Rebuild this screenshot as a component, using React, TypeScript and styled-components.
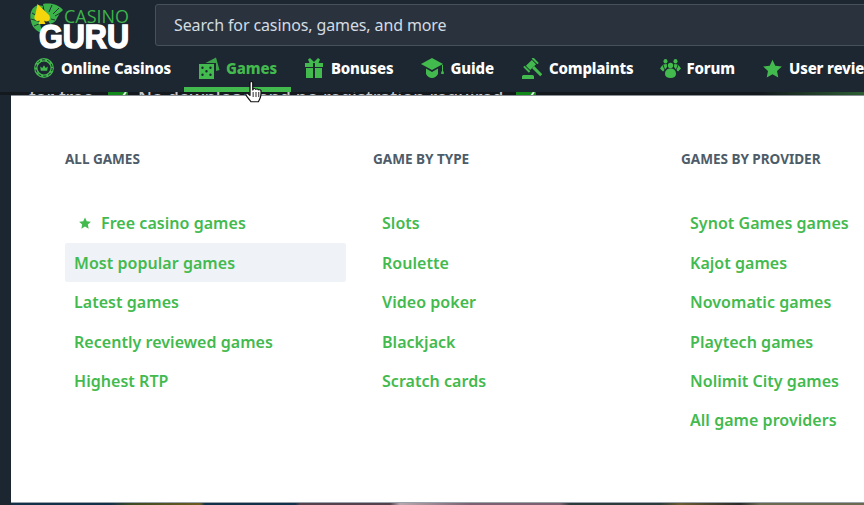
import React from "react";
import styled, { createGlobalStyle } from "styled-components";

const GREEN = "#43ba4e";

const Global = createGlobalStyle`
  html, body { margin: 0; padding: 0; background: #1c2630; }
  body { width: 864px; height: 505px; overflow: hidden; font-family: "Noto Sans", "Liberation Sans", sans-serif; }
  * { box-sizing: border-box; }
`;

const Page = styled.div`
  position: relative;
  width: 864px;
  height: 505px;
  overflow: hidden;
  display: flex;
  flex-direction: column;
  background: #1c2630;
`;

const Header = styled.header`
  height: 92px;
  flex: none;
  background: #1d2731;
`;

const TopRow = styled.div`
  height: 50px;
  display: flex;
  align-items: flex-start;
  padding: 4px 0 0 28px;
`;

const LogoBox = styled.a`
  width: 127px;
  height: 48px;
  flex: none;
  margin-top: -2px;
  display: block;
`;

const SearchBox = styled.div`
  width: 720px;
  height: 42px;
  flex: none;
  display: flex;
  align-items: center;
  padding-left: 18px;
  background: #2a333d;
  border: 1px solid #46525b;
  border-radius: 3px;
  color: #d3dbe3;
  font-size: 16px;
  letter-spacing: -0.12px;
`;

const Nav = styled.nav`
  height: 42px;
  display: flex;
  padding-left: 20px;
  white-space: nowrap;
`;

const NavItem = styled.a<{ $active?: boolean; $gap: number; $trim?: number }>`
  display: flex;
  align-items: center;
  flex: none;
  height: 42px;
  padding: 5px 14px 6px;
  gap: ${(p) => p.$gap}px;
  margin-right: ${(p) => -(p.$trim ?? 0)}px;
  font-family: "Noto Sans", sans-serif;
  font-weight: 800;
  font-size: 15px;
  letter-spacing: -0.15px;
  color: ${(p) => (p.$active ? GREEN : "#fff")};
  border-bottom: 5px solid ${(p) => (p.$active ? "#43ba4e" : "transparent")};
`;

const NavIcon = styled.svg`
  flex: none;
  fill: ${GREEN};
  display: block;
`;

const Teaser = styled.div`
  height: 3px;
  flex: none;
  overflow: hidden;
  background: linear-gradient(90deg, #14191e 0, #14191e 88%, #2c5e32 100%);
  color: #c4c8cc;
  font-size: 18px;
  font-weight: 500;
  letter-spacing: 0.07px;
  line-height: 11px;
  white-space: nowrap;
  padding-left: 29px;
  display: flex;
`;

const TeaserLead = styled.span`
  width: 67px;
  flex: none;
`;

const TeaserCheck = styled.span`
  width: 20px;
  height: 11px;
  margin: 0 10px 0 12px;
  background: #118a1a;
  flex: none;
  display: flex;
  justify-content: flex-end;
`;

const Tick = styled.svg`
  display: block;
  flex: none;
`;

const Menu = styled.section`
  flex: 1;
  margin-left: 11px;
  width: 1000px;
  background: #fff;
  border-top: 1px solid #8a9096;
  border-bottom: 1px solid #9aa3aa;
  padding: 52px 0 0 54px;
  display: grid;
  grid-template-columns: repeat(3, 281px);
  column-gap: 27px;
  align-content: start;
`;

const Column = styled.div`
  display: flex;
  flex-direction: column;
`;

const Heading = styled.h3`
  margin: 0 0 33.7px;
  height: 22px;
  line-height: 22px;
  font-size: 13.6px;
  font-weight: 700;
  color: #4d5c69;
  text-transform: uppercase;
  letter-spacing: -0.05px;
`;

const LinkRow = styled.a<{ $hover?: boolean; $starred?: boolean }>`
  height: 39.4px;
  display: flex;
  align-items: center;
  gap: 10px;
  padding-left: ${(p) => (p.$starred ? 14 : 9)}px;
  border-radius: 2px;
  font-size: 16px;
  font-weight: 600;
  letter-spacing: 0.04px;
  color: ${GREEN};
  background: ${(p) => (p.$hover ? "#eff2f7" : "transparent")};
`;

const BottomStrip = styled.div`
  height: 2px;
  flex: none;
  background: linear-gradient(90deg, #1c2630 0 11px, #12304a 11px 110px, #3c4a20 130px, #6b5a20 200px, #12304a 205px 295px, #54404a 300px 390px, #b9a7ae 400px, #7a6070 470px 560px, #2c3a3a 570px 660px, #6a5a30 680px, #2a2a2a 740px, #6b6a50 760px 864px);
`;

const Cursor = styled.svg`
  position: absolute;
  left: 245px;
  top: 81px;
  z-index: 5;
`;

const Chip = () => (
  <NavIcon width="20" height="20" viewBox="0 0 20 20">
    <circle cx="10" cy="10" r="8.200" fill="none" stroke={GREEN} strokeWidth="3.400" />
    <circle cx="10" cy="10" r="8.200" fill="none" stroke="#1d2731" strokeWidth="1" strokeDasharray="3.200 2" />
    <path d="M6.800 12.800h6.400l.6-4.300-2.100 1.400L10 7.300 8.300 9.900 6.200 8.500z" />
  </NavIcon>
);
const Dice = () => (
  <NavIcon width="22" height="22" viewBox="0 0 22 22">
    <path d="M7.500 6 18 .5l3.500 12.500-3.500 1V6z" opacity=".85" />
    <path fillRule="evenodd" d="M1 7h15v15H1zM4.500 9.500a1.200 1.200 0 1 0 0 2.400 1.200 1.200 0 0 0 0-2.400zm8 0a1.200 1.200 0 1 0 0 2.400 1.200 1.200 0 0 0 0-2.400zm-4 3.500a1.200 1.200 0 1 0 0 2.400 1.200 1.200 0 0 0 0-2.400zm-4 3.600a1.200 1.200 0 1 0 0 2.400 1.200 1.200 0 0 0 0-2.400zm8 0a1.200 1.200 0 1 0 0 2.400 1.200 1.200 0 0 0 0-2.400z" />
  </NavIcon>
);
const Gift = () => (
  <NavIcon width="18" height="20" viewBox="0 0 18 20">
    <path d="M0 5h8v4H0zM10 5h8v4h-8zM1 10h7v10H1zM10 10h7v10h-7z" />
    <path d="M3 1.500 5 0l4 4 4-4 2 1.500L13.500 5h-9z" />
  </NavIcon>
);
const Cap = () => (
  <NavIcon width="23" height="20" viewBox="0 0 23 20">
    <path d="M11 0 22 6l-11 6L0 6z" />
    <path d="M5 10.500 11 14l6-3.500V16c-1.500 2.500-3.500 4-6 4s-4.500-1.500-6-4z" />
    <path d="M21 7h1v6.500h.8V16h-2.600v-2.500h.8z" />
  </NavIcon>
);
const Gavel = () => (
  <NavIcon width="20" height="21" viewBox="0 0 20 21">
    <g transform="rotate(45 9 7)">
      <rect x="6" y="2.800" width="6" height="8.400" />
      <rect x="5" y="0" width="8" height="2" />
      <rect x="5" y="12" width="8" height="2" />
      <rect x="12" y="5.500" width="11.500" height="3" />
    </g>
    <path d="M1.500 17h9a1.500 1.500 0 0 1 1.500 1.500V21H0v-2.500A1.500 1.500 0 0 1 1.500 17z" />
  </NavIcon>
);
const People = () => (
  <NavIcon width="21" height="19" viewBox="0 0 21 19">
    <circle cx="10.500" cy="6.500" r="2.700" />
    <path d="M5 15c0-3.600 2.200-5.500 5.500-5.500S16 11.400 16 15c0 2.600-2.200 4-5.500 4S5 17.600 5 15z" />
    <ellipse cx="5.500" cy="2.300" rx="2" ry="2.300" />
    <ellipse cx="15.500" cy="2.300" rx="2" ry="2.300" />
    <path d="M3.300 5.500 6.800 5 7 8 5 10.500zM17.700 5.500 14.200 5 14 8l2 2.500z" />
    <path d="M0 9.500 2.500 6l2 5-1.500 1.500zM21 9.500 18.500 6l-2 5 1.500 1.500z" />
  </NavIcon>
);
const Star = ({ size = 19 }: { size?: number }) => (
  <NavIcon width={size} height={size} viewBox="0 0 24 24">
    <path d="m12 .8 3.500 7.600 8.300 1-6.100 5.700 1.600 8.200L12 19.200l-7.300 4.100 1.600-8.200L.2 9.400l8.300-1z" />
  </NavIcon>
);

const Logo = () => (
  <svg width="127" height="48" viewBox="0 0 127 48" role="img" aria-label="Casino Guru">
    <g fill="#3cb34a">
      <path d="M3 19C1 11 4 5 10 3l5 1-3 17 2 10C8 29 4 25 3 19z" />
      <path d="M15 2c9-1.500 16 1 20 6l-3 3-3 5c-1 3-3 5-7 6l-4-7z" />
    </g>
    <g stroke="#1d2731" strokeWidth=".9" fill="none">
      <path d="M4 11l9 5M3 17l10 3M6 24l7-3M9 5l4 8M24 3l-3 7M31 6l-6 6M34 10l-7 4M27 18l-4-1" />
    </g>
    <path d="M9.500 2 21 13c2 3 .5 6.500-2.500 6.500-1 0-1.800-.4-2.400-1l1.300 3.500h-7l1.600-4c-.8.600-1.600 1-2.500 1C6.500 19 5.500 15 7.500 12z" fill="#f5d60d" />
    <text x="36" y="21" fontFamily="'Open Sans', 'Noto Sans', sans-serif" fontSize="18" fontWeight="400" fill="#3cb34a" textLength="65" lengthAdjust="spacingAndGlyphs">CASINO</text>
    <text x="11" y="46" fontFamily="'Liberation Sans', sans-serif" fontSize="34" fontWeight="700" fill="#fff" stroke="#fff" strokeWidth="1.600" textLength="90" lengthAdjust="spacingAndGlyphs">GURU</text>
  </svg>
);

const HandCursor = () => (
  <Cursor width="20" height="24" viewBox="0 0 16 24" preserveAspectRatio="none">
    <path d="M4 1.500c0-1.300 2.200-1.300 2.200 0V9l.4-1c.8-.7 1.800-.4 2 .4.800-.7 1.900-.4 2.100.5.800-.5 1.900-.2 2.100.7.100 2 .1 4.500-.5 6.800-.4 1.800-1 3-1.600 4.300H4.800C3.500 18.500 1.500 16 .8 14c-.4-1.300.8-2 1.700-1.200L4 14.500z" fill="#fff" stroke="#111" strokeWidth="1" strokeLinejoin="round" />
    <path d="M6.500 11v5M8.800 11v5M11 11v5" stroke="#111" strokeWidth=".8" />
  </Cursor>
);

const CheckMark = () => (
  <TeaserCheck>
    <Tick width="14" height="11" viewBox="0 0 14 11">
      <path d="M3 6l3 3 6-8" fill="none" stroke="#d8ead8" strokeWidth="2" transform="translate(0 -1)" />
    </Tick>
  </TeaserCheck>
);

const columns = [
  { title: "All games", links: ["Free casino games", "Most popular games", "Latest games", "Recently reviewed games", "Highest RTP"] },
  { title: "Game by type", links: ["Slots", "Roulette", "Video poker", "Blackjack", "Scratch cards"] },
  { title: "Games by provider", links: ["Synot Games games", "Kajot games", "Novomatic games", "Playtech games", "Nolimit City games", "All game providers"] },
];

export default function App() {
  return (
    <Page>
      <Global />
      <Header>
        <TopRow>
          <LogoBox><Logo /></LogoBox>
          <SearchBox>Search for casinos, games, and more</SearchBox>
        </TopRow>
        <Nav>
          <NavItem $gap={7} $trim={1}><Chip />Online Casinos</NavItem>
          <NavItem $active $gap={6}><Dice />Games</NavItem>
          <NavItem $gap={8}><Gift />Bonuses</NavItem>
          <NavItem $gap={6}><Cap />Guide</NavItem>
          <NavItem $gap={7} $trim={2}><Gavel />Complaints</NavItem>
          <NavItem $gap={6}><People />Forum</NavItem>
          <NavItem $gap={7}><Star />User reviews</NavItem>
        </Nav>
      </Header>
      <Teaser>
        <TeaserLead>for free</TeaserLead>
        <CheckMark />
        No download and no registration required
        <CheckMark />
      </Teaser>
      <Menu>
        {columns.map((c) => (
          <Column key={c.title}>
            <Heading>{c.title}</Heading>
            {c.links.map((l) => (
              <LinkRow key={l} $hover={l === "Most popular games"} $starred={l === "Free casino games"}>
                {l === "Free casino games" && <Star size={12} />}
                {l}
              </LinkRow>
            ))}
          </Column>
        ))}
      </Menu>
      <BottomStrip />
      <HandCursor />
    </Page>
  );
}
